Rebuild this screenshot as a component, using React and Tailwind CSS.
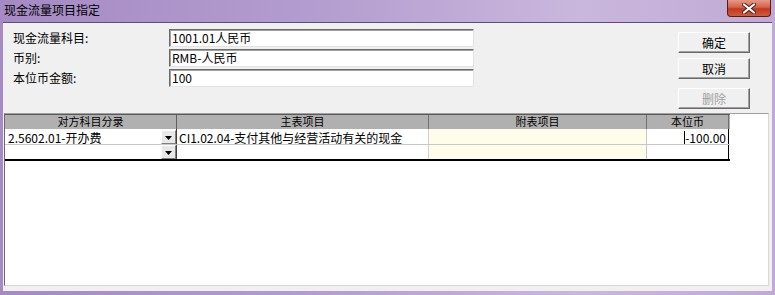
import React from 'react';

const cjk = { fontFamily: '"Noto Sans CJK SC", "Noto Sans", sans-serif' };

function Field({ label, value }) {
  return (
    <div className="flex items-center h-[18px]">
      <div className="w-[156px] text-[12px] leading-none text-black">{label}</div>
      <div className="w-[305px] h-[18px] bg-white border border-t-[#6b6b6b] border-l-[#6b6b6b] border-b-[#e3e3e3] border-r-[#e3e3e3] shadow-[inset_1px_1px_0_#a0a0a0] flex items-center pl-[2px] text-[12px] leading-none text-black">
        {value}
      </div>
    </div>
  );
}

function Btn({ children, disabled }) {
  return (
    <div className={`w-[72px] h-[21px] bg-[#f0f0f0] border border-t-white border-l-white border-b-[#696969] border-r-[#696969] shadow-[inset_-1px_-1px_0_#a0a0a0] flex items-center justify-center text-[12px] leading-none ${disabled ? 'text-[#a0a0a0]' : 'text-black'}`}>
      {children}
    </div>
  );
}

function DropBtn() {
  return (
    <div className="w-[15px] h-[14px] bg-[#e8e8e8] border border-t-white border-l-white border-b-[#808080] border-r-[#808080] flex items-end justify-center pb-[3px]">
      <svg width="7" height="4" viewBox="0 0 7 4"><path d="M0 0h7L3.5 4z" fill="#000" /></svg>
    </div>
  );
}

export default function App() {
  const cols = ['w-[172px]', 'w-[252px]', 'w-[218px]', 'w-[82px]'];
  const heads = ['对方科目分录', '主表项目', '附表项目', '本位币'];

  return (
    <div style={cjk} className="w-[775px] h-[295px] flex flex-col bg-[linear-gradient(90deg,#a58ac3_0%,#b39ccf_40%,#cab7dd_75%,#c0aad5_100%)]">
      {/* title bar */}
      <div className="h-[22px] flex justify-between">
        <div className="pl-[4px] pt-[3px] text-[12px] leading-[14px] text-black">现金流量项目指定</div>
        <div className="w-[44px] h-[17px] mr-[4px] rounded-b-[4px] border border-t-0 border-[#5e1a12] bg-[linear-gradient(180deg,#e49a88_0%,#d6624b_45%,#c0391f_55%,#cf5a3c_100%)] flex items-center justify-center">
          <svg width="14" height="11" viewBox="0 0 14 11">
            <path d="M2 1.5L12 9.5M12 1.5L2 9.5" stroke="#4a2020" strokeWidth="4" strokeLinecap="round" />
            <path d="M2 1.5L12 9.5M12 1.5L2 9.5" stroke="#fff" strokeWidth="2.2" strokeLinecap="round" />
          </svg>
        </div>
      </div>

      {/* client area */}
      <div className="flex-1 mx-[3px] mb-[4px] bg-[#f0f0f0] border-t border-[#5d4d70] flex flex-col">
        <div className="h-[90px] flex">
          <div className="pl-[10px] pt-[6px] flex flex-col gap-[2px]">
            <Field label="现金流量科目:" value="1001.01人民币" />
            <Field label="币别:" value="RMB-人民币" />
            <Field label="本位币金额:" value="100" />
          </div>
          <div className="ml-[204px] pt-[9px] flex flex-col">
            <Btn>确定</Btn>
            <div className="h-[5px]" />
            <Btn>取消</Btn>
            <div className="h-[9px]" />
            <Btn disabled>删除</Btn>
          </div>
        </div>

        {/* grid panel */}
        <div className="flex-1 ml-[1px] mr-[3px] mb-[5px] bg-white border border-t-[#a0a0a0] border-l-[#696969] border-b-[#d8d8d8] border-r-[#d8d8d8]">
          <div className="w-[725px] text-[12px] leading-none text-black">
            <div className="flex h-[15px] bg-[#b0b0b0] border-t border-[#5a5a5a]">
              {heads.map((h, i) => (
                <div key={h} className={`${cols[i]} flex items-center justify-center pb-[1px] text-[11px] leading-[11px] border-r ${i === 0 ? 'border-[#606060]' : 'border-[#707070]'}`}>{h}</div>
              ))}
            </div>
            <div className="flex h-[16px] border-b border-[#c8c8c8]">
              <div className={`${cols[0]} flex items-center justify-between pl-[3px] border-r border-[#404040]`}>
                <span className="pt-[2px]">2.5602.01-开办费</span>
                <DropBtn />
              </div>
              <div className={`${cols[1]} flex items-center pl-[2px] pt-[2px] border-r border-[#d0d0d0]`}>CI1.02.04-支付其他与经营活动有关的现金</div>
              <div className={`${cols[2]} bg-[#fdfdea] border-r border-[#c8c8c8]`} />
              <div className={`${cols[3]} flex items-center justify-end pr-[2px] pt-[1px] border-r border-black`}>
                <span className="w-[1px] h-[13px] bg-black" />
                <span className="pt-[1px]">-100.00</span>
              </div>
            </div>
            <div className="flex h-[16px] border-b-2 border-black">
              <div className={`${cols[0]} flex items-center justify-end border-r border-[#404040]`}>
                <DropBtn />
              </div>
              <div className={`${cols[1]} border-r border-[#d0d0d0]`} />
              <div className={`${cols[2]} bg-[#fdfdea] border-r border-[#c8c8c8]`} />
              <div className={`${cols[3]} border-r border-black`} />
            </div>
          </div>
        </div>
      </div>
    </div>
  );
}
